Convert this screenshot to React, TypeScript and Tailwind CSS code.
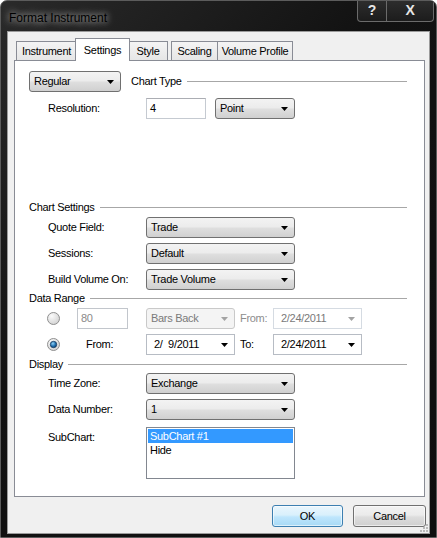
import { FC, ReactNode } from 'react'
import clsx from 'clsx'

const Arrow: FC<{ disabled?: boolean }> = ({ disabled }) => (
    <svg width="7" height="4" viewBox="0 0 7 4" className="shrink-0">
        <path d="M0 0h7L3.5 4z" fill={disabled ? '#a3a3a3' : '#000'} />
    </svg>
)

const Combo: FC<{ value: string; className: string; disabled?: boolean }> = ({
    value,
    className,
    disabled,
}) => (
    <div
        className={clsx(
            'flex h-[21px] items-center justify-between rounded-[3px] border pl-[4px] pr-[6px]',
            className,
            disabled
                ? 'border-[#c9c9c9] bg-[#f4f4f4] text-[#7a7a7a]'
                : 'border-[#707070] bg-[linear-gradient(#f3f3f3,#ececec_45%,#dedede_55%,#d0d0d0)] text-black',
        )}
    >
        <span>{value}</span>
        <Arrow disabled={disabled} />
    </div>
)

const DateBox: FC<{ value: string; className?: string; disabled?: boolean }> = ({
    value,
    className,
    disabled,
}) => (
    <div
        className={clsx(
            'flex h-[21px] w-[89px] items-center justify-between border bg-white pl-[7px] pr-[6px]',
            disabled ? 'border-[#d5dbe2] text-[#7a7a7a]' : 'border-[#b7bcc4] text-black',
            className,
        )}
    >
        <span className="whitespace-pre">{value}</span>
        <Arrow disabled={disabled} />
    </div>
)

const TextBox: FC<{ value: string; className: string; disabled?: boolean }> = ({
    value,
    className,
    disabled,
}) => (
    <div
        className={clsx(
            'flex h-[21px] items-center border bg-white pl-[3px]',
            disabled
                ? 'border-[#c2c6cc] text-[#8a8a8a]'
                : 'border-[#c5cad1] border-t-[#abadb3] text-black',
            className,
        )}
    >
        {value}
    </div>
)

const Radio: FC<{ checked?: boolean }> = ({ checked }) => (
    <svg width="13" height="13" viewBox="0 0 13 13" className="shrink-0">
        <defs>
            <radialGradient id="rbg" cx="0.35" cy="0.3" r="0.8">
                <stop offset="0" stopColor="#fbfbfb" />
                <stop offset="1" stopColor="#cfcfcf" />
            </radialGradient>
            <radialGradient id="rdot" cx="0.4" cy="0.35" r="0.7">
                <stop offset="0" stopColor="#8fd1f5" />
                <stop offset="0.6" stopColor="#1f6fb0" />
                <stop offset="1" stopColor="#0c3e6e" />
            </radialGradient>
        </defs>
        <circle cx="6.5" cy="6.5" r="6" fill="url(#rbg)" stroke="#8f8f8f" />
        {checked && <circle cx="6.5" cy="6.5" r="3.2" fill="url(#rdot)" stroke="#1a3c5e" strokeWidth="0.8" />}
    </svg>
)

const GroupHeader: FC<{ title: string; className?: string }> = ({ title, className }) => (
    <div className={clsx('flex h-[14px] items-center pl-[14px] pr-[17px]', className)}>
        <span>{title}</span>
        <div className="ml-[5px] h-0 flex-1 border-t border-[#a7a7a7]" />
    </div>
)

const Row: FC<{ label: string; className?: string; children: ReactNode }> = ({
    label,
    className,
    children,
}) => (
    <div className={clsx('flex h-[21px] items-center', className)}>
        <span className="w-[131px] shrink-0 pl-[33px]">{label}</span>
        {children}
    </div>
)

const tabs = [
    { name: 'Instrument', w: 'w-[61px]' },
    { name: 'Settings', w: 'w-[55px]', active: true },
    { name: 'Style', w: 'w-[40px]' },
    { name: 'Scaling', w: 'w-[47px] ml-[3px]' },
    { name: 'Volume Profile', w: 'w-[76px] -ml-px' },
]

const TitleButtons: FC = () => (
    <div className="-mt-px mr-[2px] flex h-[22px] text-[#e6e6e6]">
        <div className="flex w-[30px] items-center justify-center rounded-bl-[4px] border border-t-0 border-[#6b6b6b] bg-[linear-gradient(#2e2e2e,#1c1c1c)] text-[14px] font-bold">
            ?
        </div>
        <div className="flex w-[47px] items-center justify-center rounded-br-[4px] border border-l-0 border-t-0 border-[#6b6b6b] bg-[linear-gradient(#2e2e2e,#1c1c1c)] text-[14px] font-bold">
            X
        </div>
    </div>
)

const SettingsTab: FC = () => (
    <div className="flex flex-col">
        <div className="mt-[10px] flex h-[21px] items-center pl-[14px] pr-[17px]">
            <Combo value="Regular" className="w-[92px]" />
            <span className="ml-[10px]">Chart Type</span>
            <div className="ml-[5px] h-0 flex-1 border-t border-[#a7a7a7]" />
        </div>
        <Row label="Resolution:" className="mt-[6px]">
            <TextBox value="4" className="w-[60px]" />
            <Combo value="Point" className="ml-[9px] w-[80px]" />
        </Row>

        <GroupHeader title="Chart Settings" className="mt-[81px]" />
        <Row label="Quote Field:" className="mt-[3px]">
            <Combo value="Trade" className="w-[149px]" />
        </Row>
        <Row label="Sessions:" className="mt-[5px]">
            <Combo value="Default" className="w-[149px]" />
        </Row>
        <Row label="Build Volume On:" className="mt-[5px]">
            <Combo value="Trade Volume" className="w-[149px]" />
        </Row>

        <GroupHeader title="Data Range" className="mt-[1px]" />
        <div className="mt-[3px] flex h-[21px] items-center pl-[32px]">
            <Radio />
            <TextBox value="80" disabled className="ml-[17px] w-[51px]" />
            <Combo value="Bars Back" disabled className="ml-[18px] w-[89px]" />
            <span className="ml-[5px] w-[33px] text-[#8d8d8d]">From:</span>
            <DateBox value="2/24/2011" disabled />
        </div>
        <div className="mt-[5px] flex h-[21px] items-center pl-[32px]">
            <Radio checked />
            <span className="ml-[26px] w-[60px]">From:</span>
            <DateBox value="2/  9/2011" />
            <span className="ml-[5px] w-[33px]">To:</span>
            <DateBox value="2/24/2011" />
        </div>

        <GroupHeader title="Display" className="mt-[2px]" />
        <Row label="Time Zone:" className="mt-[2px]">
            <Combo value="Exchange" className="w-[149px]" />
        </Row>
        <Row label="Data Number:" className="mt-[5px]">
            <Combo value="1" className="w-[149px]" />
        </Row>
        <div className="mt-[7px] flex">
            <span className="w-[131px] shrink-0 pl-[33px] pt-[2px]">SubChart:</span>
            <div className="flex h-[52px] w-[149px] flex-col border border-[#828790] bg-white p-px">
                <div className="h-[14px] bg-[#3399ff] pl-[2px] leading-[14px] text-white">SubChart #1</div>
                <div className="h-[14px] pl-[2px] leading-[14px]">Hide</div>
            </div>
        </div>
    </div>
)

export default function App() {
    return (
        <div className="flex h-[538px] w-[437px] flex-col overflow-hidden rounded-t-[7px] border border-[#5c5c5c] bg-[linear-gradient(135deg,#2a2a2a,#121212_40%,#0e0e0e)] font-['Liberation_Sans',Arial,sans-serif] text-[11px] tracking-[-0.3px] text-black">
            <div className="flex h-[30px] shrink-0 justify-between">
                <span className="ml-[8px] mt-[8px] text-[12px] tracking-normal text-black [text-shadow:0_0_6px_rgba(255,255,255,0.75),0_0_12px_rgba(255,255,255,0.45)]">
                    Format Instrument
                </span>
                <TitleButtons />
            </div>

            <div className="relative mx-[6px] mb-[3px] flex flex-1 flex-col border border-[#9b9b9b] bg-[#f0f0f0]">
                <div className="flex h-[28px] shrink-0 items-end pl-[8px]">
                    {tabs.map((t) =>
                        t.active ? (
                            <div
                                key={t.name}
                                className={clsx(
                                    'relative z-10 -mx-[2px] -mb-px flex h-[23px] items-start justify-center border border-b-0 border-[#898c95] bg-white pt-[3px]',
                                    t.w,
                                )}
                            >
                                {t.name}
                            </div>
                        ) : (
                            <div
                                key={t.name}
                                className={clsx(
                                    'flex h-[19px] items-center justify-center border border-b-0 border-[#898c95] bg-[linear-gradient(#f4f4f4,#e6e6e6)] pt-px',
                                    t.w,
                                )}
                            >
                                {t.name}
                            </div>
                        ),
                    )}
                </div>

                <div className="ml-[6px] mr-[4px] h-[437px] shrink-0 border border-[#898c95] bg-white">
                    <SettingsTab />
                </div>

                <div className="mt-[8px] flex justify-end gap-[10px] pr-[3px]">
                    <div className="flex h-[22px] w-[71px] items-center justify-center rounded-[3px] border border-[#3c7fb1] bg-[linear-gradient(#eaf6fd,#d9f0fc_45%,#bee6fd_55%,#a7d9f5)] shadow-[inset_0_0_0_1px_rgba(255,255,255,0.6)]">
                        OK
                    </div>
                    <div className="flex h-[22px] w-[73px] items-center justify-center rounded-[3px] border border-[#707070] bg-[linear-gradient(#f2f2f2,#ebebeb_45%,#dddddd_55%,#cfcfcf)] shadow-[inset_0_0_0_1px_rgba(255,255,255,0.6)]">
                        Cancel
                    </div>
                </div>

                {/* size grip */}
                <svg width="8" height="8" viewBox="0 0 8 8" className="absolute bottom-[1px] right-[1px]">
                    {[
                        [6, 0],
                        [6, 3],
                        [3, 3],
                        [6, 6],
                        [3, 6],
                        [0, 6],
                    ].map(([x, y]) => (
                        <rect key={`${x}-${y}`} x={x} y={y} width="2" height="2" fill="#b9b9b9" />
                    ))}
                </svg>
            </div>
        </div>
    )
}
